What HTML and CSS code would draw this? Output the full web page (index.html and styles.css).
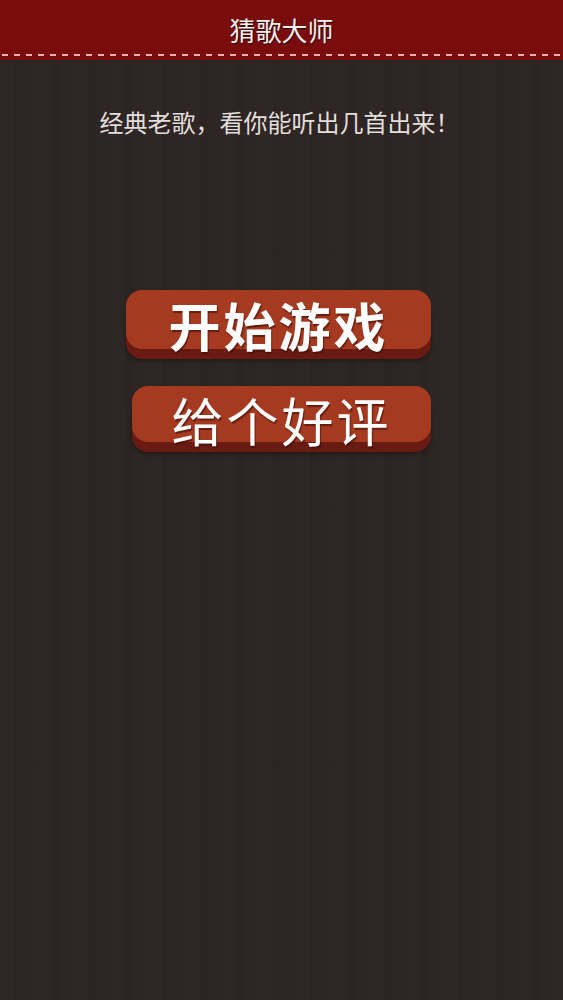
FILE: index.html
```html
<!DOCTYPE html>
<html lang="zh">
<head>
<meta charset="utf-8">
<title>猜歌大师</title>
<link rel="stylesheet" href="styles.css">
</head>
<body>
<header class="topbar">
  <h1 class="title">猜歌大师</h1>
  <div class="stitch"></div>
</header>
<main class="content">
  <p class="subtitle">经典老歌，看你能听出几首出来！</p>
  <div class="actions">
    <button class="btn btn-start">开始游戏</button>
    <button class="btn btn-rate">给个好评</button>
  </div>
</main>
</body>
</html>
```
FILE: styles.css
```css
html, body {
  margin: 0;
  padding: 0;
}
body {
  width: 563px;
  min-height: 1000px;
  background-color: #2d2523;
  background-image: repeating-linear-gradient(90deg, rgba(255,255,255,0.006) 0 14px, rgba(0,0,0,0.015) 14px 22px, rgba(255,255,255,0.004) 22px 37px);
  font-family: "Noto Sans CJK SC", "Noto Sans", sans-serif;
  color: #fff;
}
.topbar {
  height: 60px;
  background: #7a0c0c;
  box-sizing: border-box;
  padding-top: 16px;
  display: flex;
  flex-direction: column;
  align-items: stretch;
}
.title {
  margin: 0;
  font-size: 26px;
  line-height: 28px;
  font-weight: 400;
  text-align: center;
  color: #f4f0ee;
  text-shadow: 1px 1px 1px rgba(0,0,0,0.7);
}
.stitch {
  margin-top: 10px;
  height: 2px;
  background: repeating-linear-gradient(90deg, #e9b2b0 0 6px, transparent 6px 12px);
  background-position: 2px 0;
}
.content {
  display: flex;
  flex-direction: column;
}
.subtitle {
  margin: 47px 0 0 0;
  font-size: 24px;
  line-height: 30px;
  text-align: center;
  color: #e2dedc;
  padding-right: 4px;
}
.actions {
  margin-top: 153px;
  display: flex;
  flex-direction: column;
  align-items: flex-start;
}
.btn {
  border: none;
  padding: 0;
  height: 59px;
  border-radius: 16px;
  background: #a53a21;
  box-shadow: 0 10px 0 #691a12, 0 12px 4px rgba(0,0,0,0.35);
  color: #fff;
  font-family: "Noto Sans CJK SC", "Noto Sans", sans-serif;
  font-size: 52px;
  line-height: 59px;
  letter-spacing: 3px;
  text-align: center;
  text-shadow: 1px 2px 1px rgba(60,10,5,0.6);
}
.btn-start {
  margin-left: 126px;
  width: 305px;
  font-weight: 600;
  padding-top: 5px;
  box-sizing: border-box;
}
.btn-rate {
  margin-left: 132px;
  margin-top: 37px;
  width: 299px;
  height: 56px;
  line-height: 56px;
  font-weight: 400;
  padding-top: 6px;
  box-sizing: border-box;
}
```
